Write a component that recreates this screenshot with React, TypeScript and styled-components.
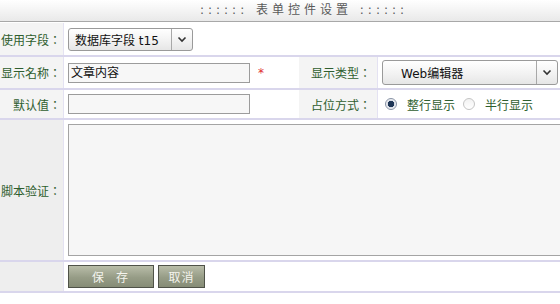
import React from "react";
import styled, { createGlobalStyle } from "styled-components";

const GlobalStyle = createGlobalStyle`
  body {
    margin: 0;
    background: #ffffff;
    font-family: "DejaVu Sans", "Noto Sans CJK SC", sans-serif;
    font-size: 12px;
  }
`;

const Form = styled.div`
  width: 560px;
  overflow: hidden;
`;

const Header = styled.div`
  height: 21px;
  line-height: 21px;
  padding-left: 48px;
  text-align: center;
  color: #5a5a5a;
  letter-spacing: 4px;
  background: linear-gradient(#ffffff, #e9e9e9);
  border-bottom: 1px solid #a8a8a8;
  margin-bottom: 1px;
`;

const Row = styled.div<{ $h: number }>`
  display: grid;
  grid-template-columns: 64px 235px 79px 1fr;
  height: ${(p) => p.$h}px;
  border-bottom: 2px solid #d9d6ec;
`;

const Label = styled.div<{ $pad?: number; $tone?: string }>`
  display: flex;
  align-items: center;
  justify-content: flex-end;
  padding-right: ${(p) => p.$pad ?? 2}px;
  background: ${(p) => p.$tone ?? "#f4f4f4"};
  color: #2f5e2f;
  font-family: "DejaVu Sans", "Noto Sans CJK TC", sans-serif;
  border-right: 1px solid #e4e2f2;
  white-space: nowrap;
`;

const Cell = styled.div<{ $span?: number }>`
  display: flex;
  align-items: center;
  gap: 6px;
  padding-left: 4px;
  background: #ffffff;
  grid-column: span ${(p) => p.$span ?? 1};
  min-width: 0;
`;

const TopCell = styled(Cell)`
  align-items: flex-start;
  padding-top: 4px;
`;

const SelectBox = styled.div<{ $w: number; $h: number; $indent: number }>`
  display: flex;
  align-items: stretch;
  width: ${(p) => p.$w}px;
  height: ${(p) => p.$h}px;
  box-sizing: border-box;
  border: 1px solid #9a9a9a;
  border-radius: 3px;
  background: linear-gradient(#ffffff, #f1f1f1 60%, #e6e6e6);
  color: #111111;
  span {
    flex: 1;
    display: flex;
    align-items: center;
    padding-left: ${(p) => p.$indent}px;
  }
`;

const Arrow = styled.div`
  width: 20px;
  display: flex;
  align-items: center;
  justify-content: center;
  border-left: 1px solid #a8a8a8;
`;

const TextInput = styled.div`
  width: 182px;
  height: 20px;
  box-sizing: border-box;
  border: 1px solid #9c9c9c;
  background: #f7f7f7;
  padding-left: 2px;
  line-height: 18px;
  color: #111111;
`;

const Required = styled.span`
  color: #e03030;
  margin-left: 2px;
`;

const TextArea = styled.div`
  flex: 1;
  height: 132px;
  box-sizing: border-box;
  border: 1px solid #a4a4a4;
  border-right: none;
  background: #f6f6f6;
`;

const Radios = styled.div`
  display: flex;
  align-items: center;
  gap: 8px;
  padding-left: 3px;
`;

const RadioGroup = styled.label`
  display: flex;
  align-items: center;
  gap: 10px;
  color: #2f5e2f;
`;

const Radio = styled.span<{ $on?: boolean }>`
  width: 12px;
  height: 12px;
  box-sizing: border-box;
  border-radius: 50%;
  border: 1px solid ${(p) => (p.$on ? "#8893a6" : "#c4c4c4")};
  background: ${(p) =>
    p.$on
      ? "radial-gradient(circle, #1e3656 0 3px, #d7dce6 3.5px, #f4f4f4 5px)"
      : "linear-gradient(#f2f2f2, #ffffff)"};
`;

const Buttons = styled.div`
  display: flex;
  gap: 4px;
`;

const Button = styled.button<{ $w: number }>`
  width: ${(p) => p.$w}px;
  height: 23px;
  border: 1px solid #4f5248;
  background: linear-gradient(#b9bda9, #969c86 55%, #868c76);
  color: #f4f4ee;
  font-family: inherit;
  font-size: 12px;
  letter-spacing: ${(p) => (p.$w > 60 ? "12px" : "1px")};
  padding: 0;
  text-indent: ${(p) => (p.$w > 60 ? "10px" : "0")};
`;

const Chevron = () => (
  <svg width="10" height="7" viewBox="0 0 10 7">
    <polyline points="1.5,1.5 5,5 8.5,1.5" fill="none" stroke="#333" strokeWidth="1.6" />
  </svg>
);

const App = () => {
  return (
    <Form>
      <GlobalStyle />
      <Header>:::::: 表单控件设置 ::::::</Header>

      <Row $h={32}>
        <Label>使用字段：</Label>
        <Cell $span={3}>
          <SelectBox $w={125} $h={23} $indent={6}>
            <span>数据库字段 t15</span>
            <Arrow>
              <Chevron />
            </Arrow>
          </SelectBox>
        </Cell>
      </Row>

      <Row $h={31}>
        <Label>显示名称：</Label>
        <Cell>
          <TextInput>文章内容</TextInput>
          <Required>*</Required>
        </Cell>
        <Label $pad={6}>显示类型：</Label>
        <Cell>
          <SelectBox $w={176} $h={25} $indent={18}>
            <span>Web编辑器</span>
            <Arrow>
              <Chevron />
            </Arrow>
          </SelectBox>
        </Cell>
      </Row>

      <Row $h={28}>
        <Label>默认值：</Label>
        <Cell>
          <TextInput />
        </Cell>
        <Label $pad={6}>占位方式：</Label>
        <Cell>
          <Radios>
            <RadioGroup>
              <Radio $on />
              整行显示
            </RadioGroup>
            <RadioGroup>
              <Radio />
              半行显示
            </RadioGroup>
          </Radios>
        </Cell>
      </Row>

      <Row $h={140}>
        <Label $tone="#eeeeee">脚本验证：</Label>
        <TopCell $span={3}>
          <TextArea />
        </TopCell>
      </Row>

      <Row $h={29}>
        <Label $tone="#eeeeee" />
        <Cell $span={3}>
          <Buttons>
            <Button $w={86}>保存</Button>
            <Button $w={47}>取消</Button>
          </Buttons>
        </Cell>
      </Row>
    </Form>
  );
};

export default App;
